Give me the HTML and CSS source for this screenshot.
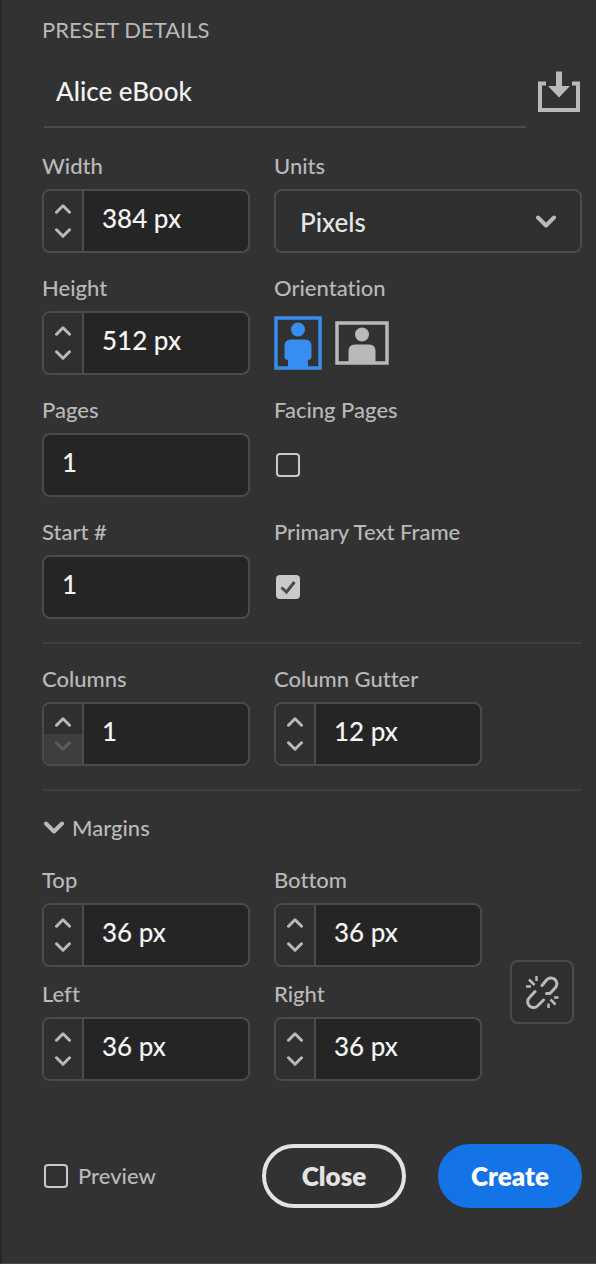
FILE: index.html
```html
<!DOCTYPE html>
<html lang="en">
<head>
<meta charset="utf-8">
<meta name="viewport" content="width=device-width, initial-scale=1">
<title>Preset Details</title>
<link rel="stylesheet" href="styles.css">
</head>
<body>
<svg class="defs" aria-hidden="true">
  <symbol id="up" viewBox="0 0 16 10"><path d="M1.5 8.2 8 1.8l6.500 6.400"/></symbol>
  <symbol id="down" viewBox="0 0 16 10"><path d="M1.500 1.800 8 8.200l6.500-6.400"/></symbol>
  <symbol id="chevron" viewBox="0 0 20 14"><path d="M2 2.500 10 10.500 18 2.500"/></symbol>
</svg>
<form class="panel">
  <h1 class="title">PRESET DETAILS</h1>
  <div class="preset">
    <input class="preset-name" type="text" value="Alice eBook" aria-label="Preset name">
    <button class="icon-button" type="button" aria-label="Save preset">
      <svg width="42" height="42" viewBox="0 0 42 42"><path d="M8 12.500H2V39H40V12.500H34" fill="none" stroke="#b9b9b9" stroke-width="4"/><path d="M18 .500H24V15H32L21 26.500 10 15H18Z" fill="#b9b9b9"/></svg>
    </button>
  </div>

  <div class="grid">
    <div class="field">
      <label for="width">Width</label>
      <div class="box">
        <div class="stepper">
          <button class="step up" type="button" aria-label="Increase width"><svg><use href="#up"/></svg></button>
          <button class="step" type="button" aria-label="Decrease width"><svg><use href="#down"/></svg></button>
        </div>
        <input id="width" type="text" value="384 px">
      </div>
    </div>
    <div class="field">
      <label for="units">Units</label>
      <div class="select">
        <select id="units"><option>Pixels</option></select>
        <svg class="chevron"><use href="#chevron"/></svg>
      </div>
    </div>
    <div class="field">
      <label for="height">Height</label>
      <div class="box">
        <div class="stepper">
          <button class="step up" type="button" aria-label="Increase height"><svg><use href="#up"/></svg></button>
          <button class="step" type="button" aria-label="Decrease height"><svg><use href="#down"/></svg></button>
        </div>
        <input id="height" type="text" value="512 px">
      </div>
    </div>
    <div class="field" role="group" aria-labelledby="orientation">
      <span class="label" id="orientation">Orientation</span>
      <div class="control orientation">
        <button class="icon-button" type="button" aria-label="Portrait" aria-pressed="true">
          <svg width="48" height="54" viewBox="0 0 48 54"><rect x="2" y="2" width="44" height="50" fill="none" stroke="#378ef0" stroke-width="3.500"/><circle cx="24" cy="13.500" r="7" fill="#378ef0"/><path d="M17 23.500H31Q37.500 23.500 37.500 30V40Q37.500 44 34 44V51H14V44Q10.500 44 10.500 40V30Q10.500 23.500 17 23.500Z" fill="#378ef0"/></svg>
        </button>
        <button class="icon-button" type="button" aria-label="Landscape" aria-pressed="false">
          <svg width="54" height="44" viewBox="0 0 54 44"><rect x="2" y="2" width="50" height="40" fill="none" stroke="#b9b9b9" stroke-width="3.500"/><circle cx="27" cy="13.500" r="7" fill="#b9b9b9"/><path d="M20 23.500H34Q40.500 23.500 40.500 30V41H13.500V30Q13.500 23.500 20 23.500Z" fill="#b9b9b9"/></svg>
        </button>
      </div>
    </div>
    <div class="field">
      <label for="pages">Pages</label>
      <div class="box"><input id="pages" type="text" value="1"></div>
    </div>
    <div class="field">
      <label for="facing">Facing Pages</label>
      <div class="control inset"><input class="check" id="facing" type="checkbox"></div>
    </div>
    <div class="field">
      <label for="start">Start #</label>
      <div class="box"><input id="start" type="text" value="1"></div>
    </div>
    <div class="field">
      <label for="frame">Primary Text Frame</label>
      <div class="control inset">
        <span class="tickbox">
          <input class="check" id="frame" type="checkbox" checked>
          <svg class="tick" viewBox="0 0 24 24"><path d="M5.500 12.500 10.500 17 18.500 7"/></svg>
        </span>
      </div>
    </div>
  </div>

  <div class="grid section">
    <div class="field">
      <label for="columns">Columns</label>
      <div class="box">
        <div class="stepper">
          <button class="step up" type="button" aria-label="Increase columns"><svg><use href="#up"/></svg></button>
          <button class="step" type="button" aria-label="Decrease columns" disabled><svg><use href="#down"/></svg></button>
        </div>
        <input id="columns" type="text" value="1">
      </div>
    </div>
    <div class="field">
      <label for="gutter">Column Gutter</label>
      <div class="box">
        <div class="stepper">
          <button class="step up" type="button" aria-label="Increase gutter"><svg><use href="#up"/></svg></button>
          <button class="step" type="button" aria-label="Decrease gutter"><svg><use href="#down"/></svg></button>
        </div>
        <input id="gutter" type="text" value="12 px">
      </div>
    </div>
  </div>

  <div class="section">
    <button class="disclosure" type="button" aria-expanded="true"><svg class="chevron"><use href="#chevron"/></svg>Margins</button>
    <div class="margins">
      <div class="grid margin-grid">
        <div class="field">
          <label for="top">Top</label>
          <div class="box">
            <div class="stepper">
              <button class="step up" type="button" aria-label="Increase top"><svg><use href="#up"/></svg></button>
              <button class="step" type="button" aria-label="Decrease top"><svg><use href="#down"/></svg></button>
            </div>
            <input id="top" type="text" value="36 px">
          </div>
        </div>
        <div class="field">
          <label for="bottom">Bottom</label>
          <div class="box">
            <div class="stepper">
              <button class="step up" type="button" aria-label="Increase bottom"><svg><use href="#up"/></svg></button>
              <button class="step" type="button" aria-label="Decrease bottom"><svg><use href="#down"/></svg></button>
            </div>
            <input id="bottom" type="text" value="36 px">
          </div>
        </div>
        <div class="field">
          <label for="left">Left</label>
          <div class="box">
            <div class="stepper">
              <button class="step up" type="button" aria-label="Increase left"><svg><use href="#up"/></svg></button>
              <button class="step" type="button" aria-label="Decrease left"><svg><use href="#down"/></svg></button>
            </div>
            <input id="left" type="text" value="36 px">
          </div>
        </div>
        <div class="field">
          <label for="right">Right</label>
          <div class="box">
            <div class="stepper">
              <button class="step up" type="button" aria-label="Increase right"><svg><use href="#up"/></svg></button>
              <button class="step" type="button" aria-label="Decrease right"><svg><use href="#down"/></svg></button>
            </div>
            <input id="right" type="text" value="36 px">
          </div>
        </div>
      </div>
      <button class="link-button" type="button" aria-label="Link margins">
        <svg width="34" height="34" viewBox="0 0 34 34" fill="none" stroke="#b9b9b9" stroke-width="3"><path d="M17 10.500 21.500 5A5.800 5.800 0 0 1 30.500 12.500L25 18.500H21.500M10 16.500 4.500 22.500A5.800 5.800 0 0 0 12.500 31L18.500 25" stroke-linecap="round" stroke-linejoin="round"/><path d="M4 4.500 9.500 10M11.500 1V6M1 11.500H6M25.500 24.500 30.500 29.500M23.500 28.500V33M29 22.500H33.500" stroke-width="2.500"/></svg>
      </button>
    </div>
  </div>

  <div class="footer">
    <label class="preview"><input class="check" type="checkbox">Preview</label>
    <button class="button" type="button">Close</button>
    <button class="button primary" type="submit">Create</button>
  </div>
</form>
</body>
</html>
```
FILE: styles.css
```css
* {
  box-sizing: border-box;
}

body {
  margin: 0;
  background: #323232;
  color: #b9b9b9;
  font: 500 22px/26px Lato, "Noto Sans", sans-serif;
  font-variant-ligatures: none;
}

button,
input,
select {
  margin: 0;
  padding: 0;
  border: 0;
  border-radius: 0;
  background: none;
  color: inherit;
  font: inherit;
}

svg {
  display: block;
  flex: none;
}

.defs {
  display: none;
}

.panel {
  min-height: 100vh;
  padding: 17px 14px 54px 40px;
  border-left: 2px solid #272727;
  border-bottom: 1px solid #484848;
}

.title {
  margin: 0;
  font-size: 22px;
  font-weight: 400;
}

.preset {
  display: flex;
  align-items: center;
  gap: 12px;
  margin-bottom: 25px;
  padding: 13px 2px 0;
}

.preset-name {
  flex: 1;
  min-width: 0;
  height: 72px;
  padding: 0 12px;
  border-bottom: 2px solid #4b4b4b;
  color: #f2f2f2;
  font-size: 26px;
}

.icon-button {
  flex: none;
}

.grid {
  display: grid;
  grid-template-columns: 208px 1fr;
  gap: 22px 24px;
}

.field label,
.label {
  display: block;
  margin-bottom: 10px;
}

.box {
  display: flex;
  width: 208px;
  height: 64px;
  overflow: hidden;
  border: 2px solid #4b4b4b;
  border-radius: 8px;
  background: #252525;
}

.box input {
  flex: 1;
  min-width: 0;
  padding: 0 18px 6px;
  color: #f5f5f5;
  font-size: 26px;
}

.stepper {
  display: flex;
  flex-direction: column;
  width: 40px;
  border-right: 2px solid #4b4b4b;
  background: #2f2f2f;
}

.step {
  display: flex;
  flex: 1;
  justify-content: center;
  padding: 7px 0;
}

.step.up {
  align-items: flex-end;
}

.step:disabled {
  background: #3e3e3e;
  color: #5c5c5c;
}

.step svg,
.chevron {
  width: 16px;
  height: 10px;
  fill: none;
  stroke: currentColor;
  stroke-width: 3;
  stroke-linecap: round;
  stroke-linejoin: round;
}

.chevron {
  width: 20px;
  height: 14px;
  stroke-width: 4;
}

.select {
  position: relative;
}

.select select {
  width: 100%;
  height: 64px;
  padding: 2px 24px 0;
  appearance: none;
  border: 2px solid #4b4b4b;
  border-radius: 8px;
  background: #2f2f2f;
  color: #e6e6e6;
  font-size: 26px;
}

.select .chevron {
  position: absolute;
  top: 26px;
  right: 26px;
  pointer-events: none;
}

.control {
  display: flex;
  align-items: center;
  height: 64px;
}

.inset {
  padding-left: 2px;
}

.orientation {
  gap: 13px;
}

.check {
  display: block;
  flex: none;
  width: 24px;
  height: 24px;
  appearance: none;
  border: 2px solid #cacaca;
  border-radius: 4px;
}

.check:checked {
  background: #cacaca;
}

.tickbox {
  position: relative;
}

.tick {
  position: absolute;
  inset: 0;
  fill: none;
  stroke: #4a4a4a;
  stroke-width: 3;
  pointer-events: none;
}

.section {
  margin-top: 23px;
  padding-top: 22px;
  border-top: 2px solid #3e3e3e;
}

.disclosure {
  display: flex;
  align-items: center;
  gap: 8px;
  margin-bottom: 26px;
  padding: 2px 0 0 2px;
}

.margins {
  display: flex;
  align-items: center;
  gap: 28px;
}

.margin-grid {
  grid-template-columns: 208px 208px;
  row-gap: 14px;
}

.link-button {
  display: grid;
  place-items: center;
  width: 64px;
  height: 64px;
  margin-top: 36px;
  border: 2px solid #4b4b4b;
  border-radius: 8px;
  background: #2f2f2f;
}

.footer {
  display: flex;
  align-items: center;
  gap: 32px;
  margin-top: 63px;
}

.preview {
  display: flex;
  align-items: center;
  gap: 10px;
  margin-right: auto;
  padding-left: 2px;
}

.button {
  width: 144px;
  height: 64px;
  border: 4px solid #e3e3e3;
  border-radius: 32px;
  color: #e3e3e3;
  font-size: 26px;
  font-weight: 800;
}

.primary {
  border-color: #1473e6;
  background: #1473e6;
  color: #fff;
}
```
